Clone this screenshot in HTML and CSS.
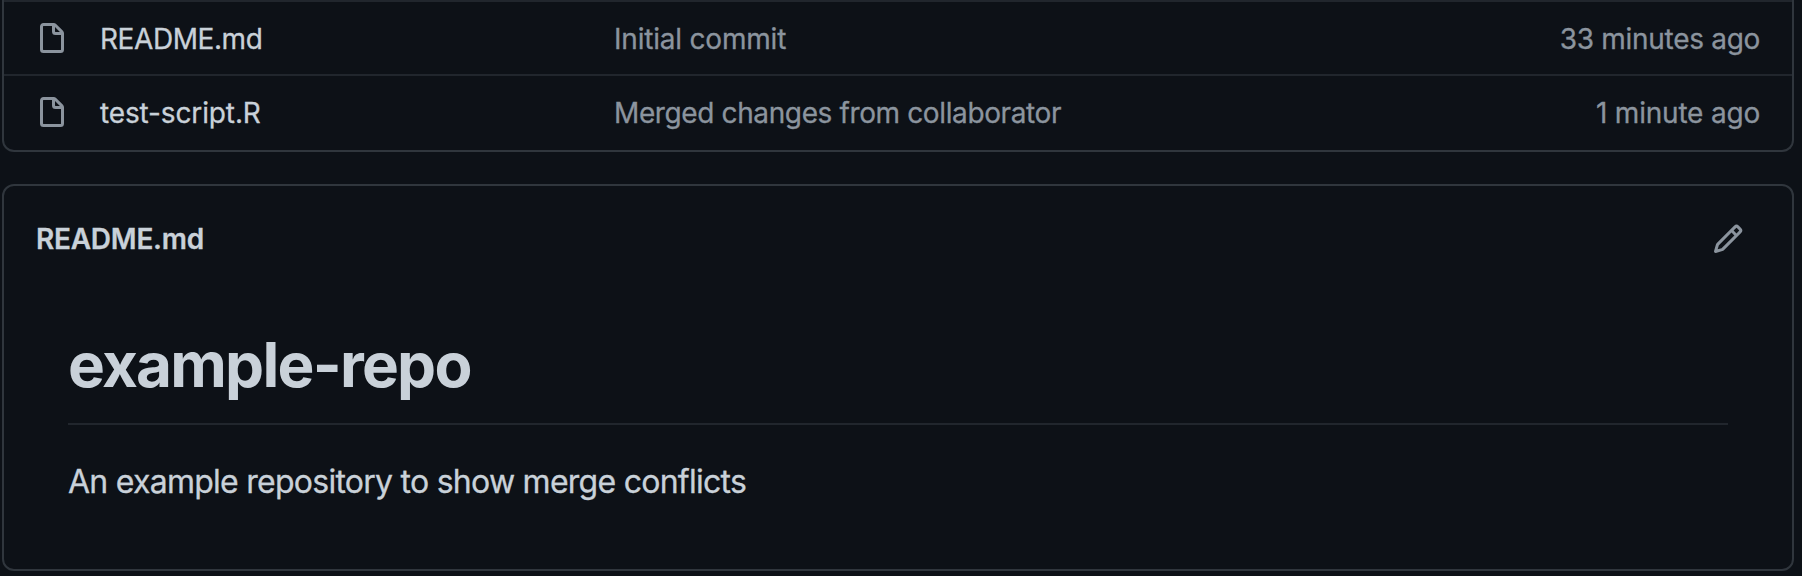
FILE: index.html
```html
<!DOCTYPE html>
<html lang="en">
<head>
<meta charset="utf-8">
<title>example-repo</title>
<link rel="stylesheet" href="styles.css">
</head>
<body>
<main class="page">
  <section class="files">
    <div class="row">
      <svg class="icon" viewBox="0 0 16 16"><path fill-rule="evenodd" d="M3.75 1.5a.25.25 0 0 0-.25.25v11.5c0 .138.112.25.25.25h8.5a.25.25 0 0 0 .25-.25V6H9.75A1.75 1.75 0 0 1 8 4.25V1.5H3.75zm5.75.56v2.19c0 .138.112.25.25.25h2.19L9.5 2.06zM2 1.75C2 .784 2.784 0 3.75 0h5.086c.464 0 .909.184 1.237.513l3.414 3.414c.329.328.513.773.513 1.237v8.086A1.75 1.75 0 0 1 12.25 15h-8.5A1.75 1.75 0 0 1 2 13.25V1.75z"/></svg>
      <span class="name name-caps">README.md</span>
      <span class="message message-short">Initial commit</span>
      <span class="time">33 minutes ago</span>
    </div>
    <div class="row">
      <svg class="icon" viewBox="0 0 16 16"><path fill-rule="evenodd" d="M3.75 1.5a.25.25 0 0 0-.25.25v11.5c0 .138.112.25.25.25h8.5a.25.25 0 0 0 .25-.25V6H9.75A1.75 1.75 0 0 1 8 4.25V1.5H3.75zm5.75.56v2.19c0 .138.112.25.25.25h2.19L9.5 2.06zM2 1.75C2 .784 2.784 0 3.75 0h5.086c.464 0 .909.184 1.237.513l3.414 3.414c.329.328.513.773.513 1.237v8.086A1.75 1.75 0 0 1 12.25 15h-8.5A1.75 1.75 0 0 1 2 13.25V1.75z"/></svg>
      <span class="name">test-script.R</span>
      <span class="message">Merged changes from collaborator</span>
      <span class="time time-short">1 minute ago</span>
    </div>
  </section>
  <section class="panel">
    <header class="panel-header">
      <h2 class="panel-title">README.md</h2>
      <svg class="icon" viewBox="0 0 16 16"><path d="M11.013 1.427a1.75 1.75 0 0 1 2.474 0l1.086 1.086a1.75 1.75 0 0 1 0 2.474l-8.61 8.61c-.21.21-.47.364-.756.445l-3.251.93a.75.75 0 0 1-.927-.928l.929-3.25c.081-.286.235-.547.445-.758l8.61-8.61Zm.176 4.823L9.75 4.81l-6.286 6.287a.253.253 0 0 0-.064.108l-.558 1.953 1.953-.558a.253.253 0 0 0 .108-.064Zm1.238-3.763a.25.25 0 0 0-.354 0L10.811 3.75l1.439 1.44 1.263-1.263a.25.25 0 0 0 0-.354Z"/></svg>
    </header>
    <article class="content">
      <h1 class="heading">example-repo</h1>
      <p class="text">An example repository to show merge conflicts</p>
    </article>
  </section>
</main>
</body>
</html>
```
FILE: styles.css
```css
* { box-sizing: border-box; }
body { margin: 0; background: #0d1117; color: #c9d1d9; font-family: Inter, "Liberation Sans", sans-serif; font-size: 28px; overflow: hidden; }
.page { padding: 0 8px 0 2px; }
.files { border: 2px solid #30363d; border-top: 0; border-radius: 0 0 12px 12px; }
.row { display: flex; align-items: center; height: 74px; padding: 2px 32px 0; border-top: 2px solid #21262d; line-height: 42px; }
.row:last-child { height: 76px; padding-bottom: 2px; }
.icon { width: 32px; height: 32px; fill: #8b949e; flex: none; }
.name { width: 514px; margin-left: 32px; flex: none; letter-spacing: -.13px; }
.name-caps { letter-spacing: -.42px; }
.message { color: #8b949e; flex: 1; letter-spacing: -.38px; }
.message-short { letter-spacing: -.2px; }
.time { color: #8b949e; letter-spacing: -.3px; }
.time-short { letter-spacing: -.2px; }
.name, .message, .time, .text { -webkit-text-stroke: .3px currentColor; }
.panel { margin-top: 32px; height: 387px; border: 2px solid #30363d; border-radius: 12px; padding: 32px; }
.panel-header { display: flex; align-items: center; justify-content: space-between; height: 42px; padding-right: 16px; }
.panel-title { margin: 0; font-size: 28px; font-weight: 600; line-height: 42px; letter-spacing: -.25px; -webkit-text-stroke: .3px currentColor; }
.content { padding: 65px 32px 0; }
.heading { margin: 0 0 33px; padding-bottom: 18px; border-bottom: 2px solid #21262d; font-size: 62px; font-weight: 700; line-height: 80px; letter-spacing: -1.75px; }
.text { margin: 0; font-size: 32px; line-height: 48px; letter-spacing: -.74px; }
```
